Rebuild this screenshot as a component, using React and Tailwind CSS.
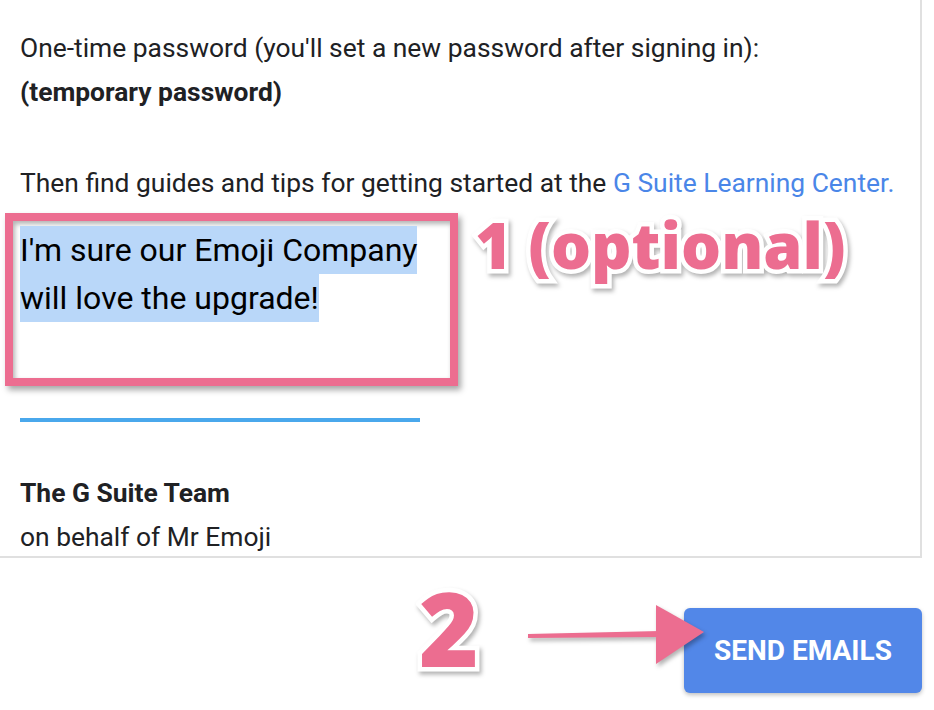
import React from 'react';

const roboto = "font-['Roboto','Liberation_Sans',sans-serif]";

function Outlined({ children, className }) {
  // pink annotation text with a white outline and soft shadow
  return (
    <span
      className={`font-['Open_Sans',sans-serif] font-extrabold text-[#ec6d90] [-webkit-text-stroke:9px_#fff] [paint-order:stroke_fill] drop-shadow-[2px_3px_2px_rgba(0,0,0,0.3)] ${className}`}
    >
      {children}
    </span>
  );
}

export default function App() {
  return (
    <div className={`relative w-[934px] h-[710px] bg-white overflow-hidden ${roboto} text-[#202124]`}>
      {/* email preview card */}
      <div className="w-[922px] h-[558px] bg-white border-r-2 border-b-2 border-[#e0e0e0] overflow-hidden pt-[26px] pl-[20px]">
        <div className="text-[26.4px] leading-[44px]">
          <p>One-time password (you'll set a new password after signing in):</p>
          <p className="font-bold">(temporary password)</p>
          <p className="mt-[47px] whitespace-nowrap">
            Then find guides and tips for getting started at the{' '}
            <span className="text-[#4a86e8]">G Suite Learning Center.</span>
          </p>
        </div>

        {/* custom message, highlighted */}
        <div className="ml-[-15px] mt-[8px] w-[453px] h-[173px] border-[8px] border-[#ec6d90] shadow-[3px_4px_6px_rgba(0,0,0,0.35),inset_2px_3px_5px_rgba(0,0,0,0.3)] pl-[7px] pt-[5px]">
          <p className="text-[32px] leading-[48px] text-black w-[425px]">
            <span className="bg-[#b9d7f9] py-[5px] [box-decoration-break:clone]">
              I'm sure our Emoji Company will love the upgrade!
            </span>
          </p>
        </div>

        <div className="mt-[32px] w-[400px] h-[4px] bg-[#4aa8ec]" />

        <div className="mt-[49px] text-[26.4px] leading-[44px]">
          <p className="font-bold">The G Suite Team</p>
          <p>on behalf of Mr Emoji</p>
        </div>
      </div>

      {/* actions row */}
      <div className="relative w-[922px] mt-[50px] flex justify-end">
        <button className="w-[238px] h-[85px] rounded-[6px] bg-[#5287e8] text-white font-bold text-[28px] shadow-[0_2px_4px_rgba(0,0,0,0.25)]">
          SEND EMAILS
        </button>

        <Outlined className="absolute left-[419px] top-[-31px] text-[102px] leading-none">2</Outlined>

        <svg className="absolute left-[520px] top-[-6px] drop-shadow-[2px_3px_2px_rgba(0,0,0,0.3)]" width="200" height="70" viewBox="0 0 200 70">
          <path d="M8 32 L140 29 L140 35 L8 36 Z" fill="#ec6d90" />
          <path d="M136 3 L184 30 L136 62 Z" fill="#ec6d90" />
        </svg>
      </div>

      <Outlined className="absolute left-[475px] top-[213px] text-[63px] leading-none">1 (optional)</Outlined>
    </div>
  );
}
